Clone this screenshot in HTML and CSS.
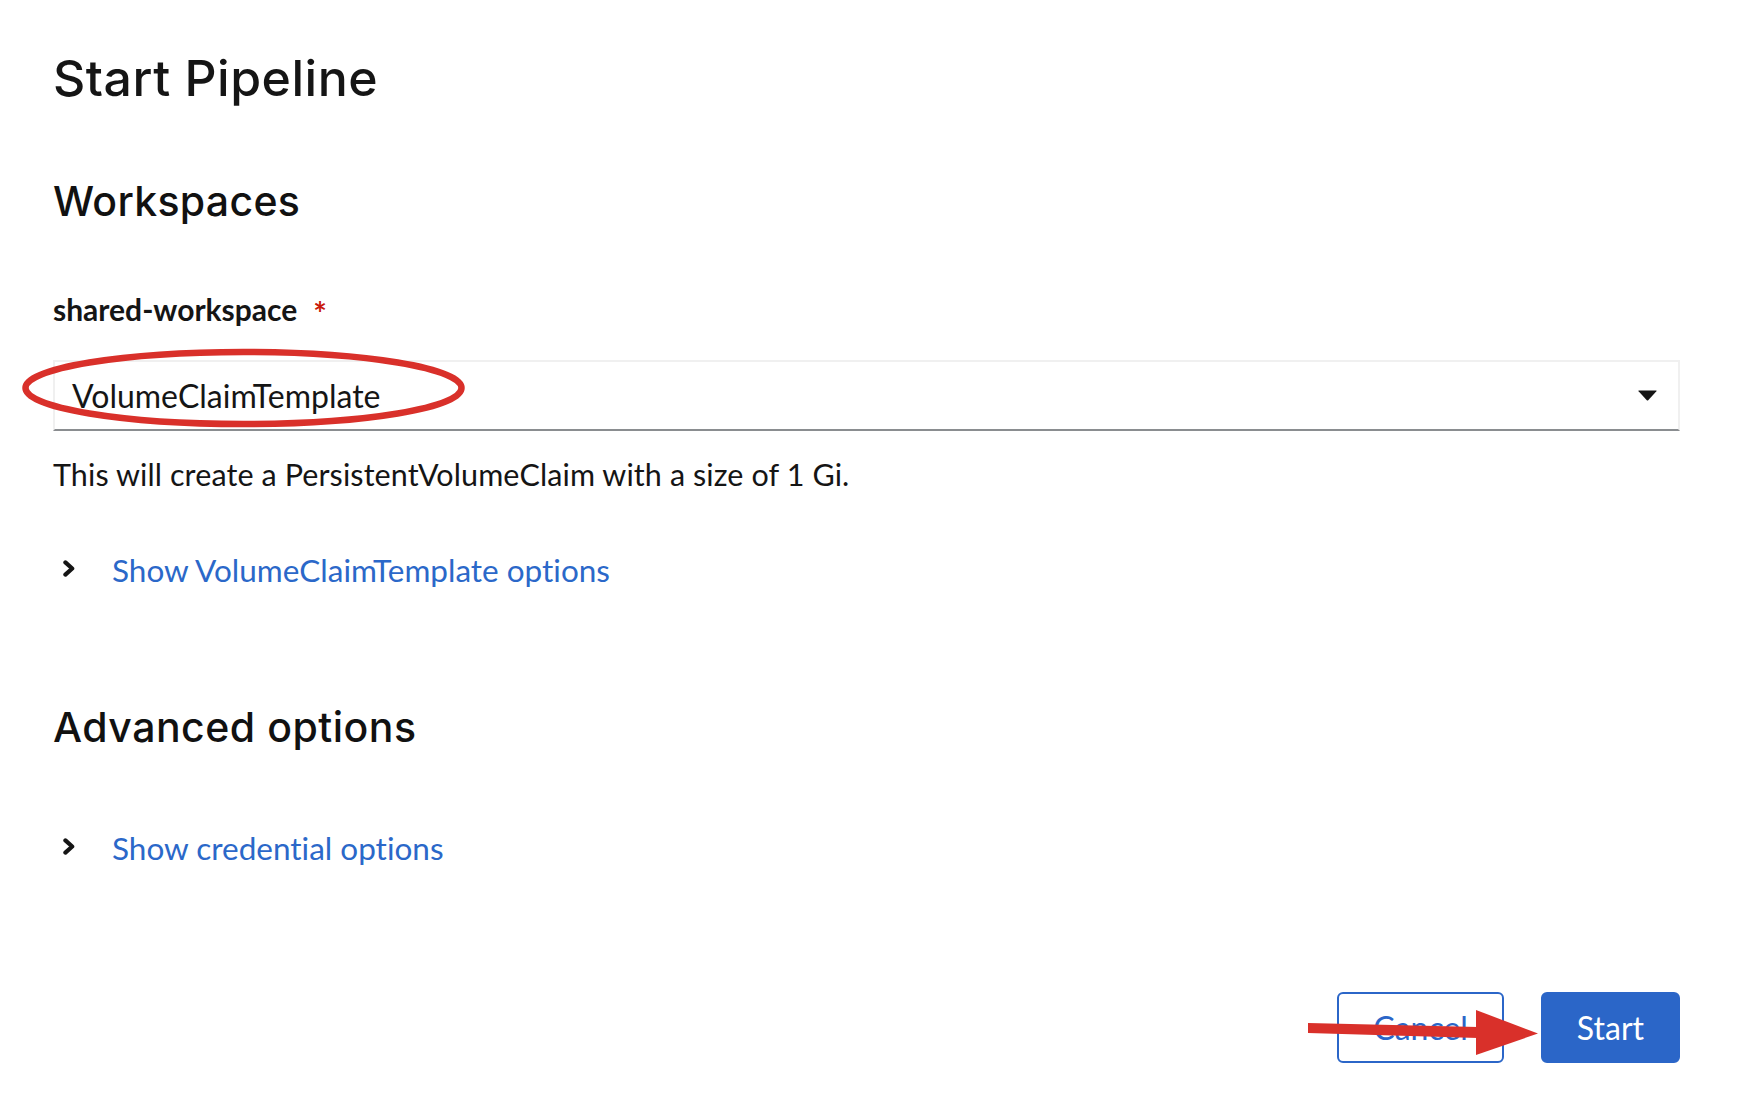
FILE: index.html
```html
<!DOCTYPE html>
<html lang="en">
<head>
<meta charset="utf-8">
<title>Start Pipeline</title>
<link rel="stylesheet" href="styles.css">
</head>
<body>
<div class="page">
  <h1 class="title">Start Pipeline</h1>

  <h2 class="section-title section-title--workspaces">Workspaces</h2>

  <div class="field">
    <label class="field-label">shared-workspace<span class="required">*</span></label>
    <div class="select-wrap">
      <div class="select">
        <span class="select-value">VolumeClaimTemplate</span>
        <svg class="select-caret" width="19" height="11" viewBox="0 0 19 11"><path d="M0.8 0.5 H18.2 Q19 0.5 18.4 1.2 L10.2 10.2 Q9.5 10.9 8.8 10.2 L0.6 1.2 Q0 0.5 0.8 0.5 Z" fill="#151515"/></svg>
      </div>
      <svg class="annot-ellipse" width="443" height="80" viewBox="0 0 443 80"><ellipse cx="221.5" cy="40" rx="218" ry="36" fill="none" stroke="#d9302a" stroke-width="6.5"/></svg>
    </div>
    <p class="helper">This will create a PersistentVolumeClaim with a size of 1 Gi.</p>
  </div>

  <div class="toggle toggle--first">
    <svg class="chevron" width="12" height="17" viewBox="0 0 12 17"><polyline points="2.4,2.4 9.2,8.5 2.4,14.6" fill="none" stroke="#151515" stroke-width="4.2" stroke-linejoin="round" stroke-linecap="round"/></svg>
    <a class="toggle-link">Show VolumeClaimTemplate options</a>
  </div>

  <h2 class="section-title section-title--advanced">Advanced options</h2>

  <div class="toggle toggle--second">
    <svg class="chevron" width="12" height="17" viewBox="0 0 12 17"><polyline points="2.4,2.4 9.2,8.5 2.4,14.6" fill="none" stroke="#151515" stroke-width="4.2" stroke-linejoin="round" stroke-linecap="round"/></svg>
    <a class="toggle-link">Show credential options</a>
  </div>

  <div class="footer">
    <button class="btn btn--secondary">Cancel</button>
    <button class="btn btn--primary">Start</button>
    <svg class="annot-arrow" width="234" height="54" viewBox="0 0 234 54"><polygon points="2,17 172,21 172,32 2,27" fill="#d9302a"/><polygon points="170,4 232,27.5 170,49" fill="#d9302a"/></svg>
  </div>
</div>
</body>
</html>
```
FILE: styles.css
```css
html, body {
  margin: 0;
  padding: 0;
  background: #ffffff;
}

body {
  font-family: Lato, "Liberation Sans", sans-serif;
  color: #151515;
  font-variant-ligatures: none;
}

.page {
  padding: 48px 62px 0 53px;
}

.title {
  margin: 0;
  font-family: Inter, "Noto Sans", sans-serif;
  font-weight: 500;
  font-size: 50px;
  line-height: 60px;
  letter-spacing: 0.5px;
  color: #151515;
}

.section-title {
  margin: 0;
  font-family: Inter, "Noto Sans", sans-serif;
  font-weight: 500;
  font-size: 41px;
  line-height: 50px;
  letter-spacing: 0.3px;
  color: #111111;
}

.section-title--workspaces {
  margin-top: 68px;
}

.section-title--advanced {
  margin-top: 113px;
  letter-spacing: 0.5px;
}

.field {
  margin-top: 65px;
}

.field-label {
  display: block;
  height: 36px;
  font-weight: 700;
  font-size: 30px;
  line-height: 36px;
}

.required {
  color: #c9190b;
  margin-left: 16px;
  font-size: 32px;
  line-height: 0;
  vertical-align: -5px;
}

.select-wrap {
  position: relative;
  margin-top: 33px;
}

.select {
  display: flex;
  align-items: center;
  justify-content: space-between;
  height: 67px;
  border: 2px solid #f0f0f0;
  border-bottom-color: #8a8d90;
  padding: 0 21px 0 17px;
}

.select-value {
  font-size: 32px;
  line-height: 67px;
  color: #151515;
}

.select-caret {
  display: block;
  flex: none;
}

.annot-ellipse {
  position: absolute;
  left: -31px;
  top: -12px;
  pointer-events: none;
}

.helper {
  margin: 25px 0 0;
  font-size: 30.5px;
  line-height: 36px;
  letter-spacing: 0.1px;
  color: #151515;
}

.toggle {
  display: flex;
  align-items: center;
  gap: 37px;
  padding-left: 10px;
  line-height: 38px;
}

.toggle--first {
  margin-top: 59px;
}

.toggle--second {
  margin-top: 77px;
}

.chevron {
  display: block;
  flex: none;
  margin-top: -4px;
}

.toggle-link {
  font-size: 31.5px;
  color: #2b68c9;
  text-decoration: none;
}

.footer {
  position: relative;
  display: flex;
  justify-content: flex-end;
  gap: 37px;
  margin-top: 125px;
}

.btn {
  height: 71px;
  padding: 0 34px;
  border: 2px solid #2b66c8;
  border-radius: 6px;
  font-family: Lato, "Liberation Sans", sans-serif;
  font-size: 32px;
  line-height: 67px;
  cursor: pointer;
}

.btn--secondary {
  background: #ffffff;
  color: #2b66c8;
}

.btn--primary {
  background: #2b66c8;
  color: #ffffff;
}

.annot-arrow {
  position: absolute;
  right: 140px;
  top: 14px;
  pointer-events: none;
}
```
